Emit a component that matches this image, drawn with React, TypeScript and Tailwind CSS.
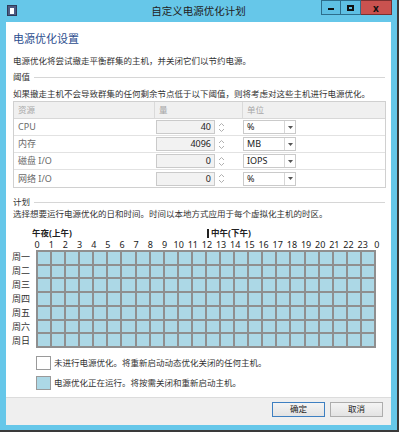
import React from "react";

const rows = [
  { name: "CPU", val: "40", unit: "%" },
  { name: "内存", val: "4096", unit: "MB" },
  { name: "磁盘 I/O", val: "0", unit: "IOPS" },
  { name: "网络 I/O", val: "0", unit: "%" },
];
const days = ["周一", "周二", "周三", "周四", "周五", "周六", "周日"];
const hours = Array.from({ length: 25 }, (_, i) => (i === 24 ? 0 : i));

function Spin() {
  return (
    <svg width="7" height="11" viewBox="0 0 7 11" className="ml-[3px]">
      <path d="M1 4 L3.5 1.5 L6 4" fill="none" stroke="#b0b0b0" strokeWidth="1" />
      <path d="M1 7 L3.5 9.5 L6 7" fill="none" stroke="#b0b0b0" strokeWidth="1" />
    </svg>
  );
}

function Section({ label }: { label: string }) {
  return (
    <div className="flex items-center h-full pl-[7px] pr-[6px]">
      <span className="text-[8.5px] text-[#333]">{label}</span>
      <div className="flex-1 ml-[4px] h-px bg-[#d6d6d6]" />
    </div>
  );
}

export default function App() {
  return (
    <div className="w-[401px] h-[435px] bg-white font-['Noto_Sans','Noto_Sans_CJK_SC',sans-serif]">
      <div className="w-[399px] h-[432px] bg-[#66c7e9] border-r-2 border-b-2 border-[#3a3a3a] flex flex-col">
        {/* Title bar */}
        <div className="h-[22px] grid grid-cols-[1fr_auto_1fr] items-start">
          <div className="pl-[7px] pt-[5px]">
            <div className="w-[10px] h-[11px] bg-[#4d5b83] border border-[#2f3a58] flex items-center justify-center">
              <div className="w-[4px] h-[6px] bg-white" />
            </div>
          </div>
          <div className="h-[22px] leading-[22px] text-[10.5px] text-[#222]">自定义电源优化计划</div>
          <div className="flex justify-end pr-[5px]">
            <div className="w-[20px] h-[15px] bg-[#5ec0e4] border border-[#2d6e8c] flex items-end justify-center pb-[4px]">
              <div className="w-[6px] h-[2px] bg-[#111]" />
            </div>
            <div className="w-[20px] h-[15px] bg-[#5ec0e4] border-y border-r border-[#2d6e8c] flex items-center justify-center">
              <div className="w-[7px] h-[6px] border-2 border-[#111]" />
            </div>
            <div className="w-[31px] h-[15px] bg-[#c9524f] border-y border-r border-[#7a3030] flex items-center justify-center text-[10px] font-bold text-[#111] leading-none">
              x
            </div>
          </div>
        </div>

        {/* Content */}
        <div className="mx-[6px] h-[375px] bg-white flex flex-col">
          <div className="mt-[10px] h-[14px] leading-[14px] pl-[7px] text-[11px] text-[#2c4d8e]">电源优化设置</div>
          <div className="mt-[9px] h-[12px] leading-[12px] pl-[7px] text-[8.5px] text-[#333]">
            电源优化将尝试撤走平衡群集的主机，并关闭它们以节约电源。
          </div>
          <div className="mt-[4px] h-[12px]">
            <Section label="阈值" />
          </div>
          <div className="mt-[5px] h-[12px] leading-[12px] pl-[7px] text-[8.5px] text-[#333]">
            如果撤走主机不会导致群集的任何剩余节点低于以下阈值，则将考虑对这些主机进行电源优化。
          </div>

          {/* Table */}
          <div className="mt-[1px] ml-[7px] w-[373px] border border-[#d0d0d0]">
            <div className="h-[17px] bg-[#f0f0f0] border-b border-[#d8d8d8] flex text-[8.5px] text-[#a6a6a6]">
              <div className="w-[141px] pl-[4px] flex items-center border-r border-[#dadada]">资源</div>
              <div className="w-[88px] pl-[4px] flex items-center border-r border-[#dadada]">量</div>
              <div className="flex-1 pl-[4px] flex items-center">单位</div>
            </div>
            {rows.map((r, i) => (
              <div
                key={r.name}
                className={`h-[17px] flex items-center text-[9px] ${i < rows.length - 1 ? "border-b border-[#e2e2e2]" : ""}`}
              >
                <div className="w-[141px] pl-[4px] text-[#6a6a6a]">{r.name}</div>
                <div className="w-[88px] flex items-center pl-[1px]">
                  <div className="w-[59px] h-[14px] bg-[#f2f2f2] border border-[#cacaca] text-right pr-[3px] leading-[12px] text-[#222]">
                    {r.val}
                  </div>
                  <Spin />
                </div>
                <div className="flex-1 flex items-center">
                  <div className="w-[53px] h-[14px] bg-white border border-[#cacaca] flex">
                    <div className="flex-1 pl-[3px] leading-[12px] text-[#222]">{r.unit}</div>
                    <div className="w-[11px] border-l border-[#d6d6d6] flex items-center justify-center">
                      <svg width="5" height="3" viewBox="0 0 5 3">
                        <path d="M0 0 L5 0 L2.5 3 Z" fill="#555" />
                      </svg>
                    </div>
                  </div>
                </div>
              </div>
            ))}
          </div>

          <div className="mt-[9px] h-[11px]">
            <Section label="计划" />
          </div>
          <div className="h-[11px] leading-[11px] pl-[7px] text-[8.5px] text-[#333]">
            选择想要运行电源优化的日和时间。时间以本地方式应用于每个虚拟化主机的时区。
          </div>

          {/* midnight / noon labels */}
          <div className="mt-[8px] h-[12px] flex items-center pl-[26px] text-[8.5px] font-bold text-[#222]">
            <div className="w-[175px] leading-[12px]">午夜(上午)</div>
            <div className="w-[2px] h-[9px] bg-[#222]" />
            <div className="ml-[2px] leading-[12px]">中午(下午)</div>
          </div>

          {/* hours */}
          <div className="mt-[1px] h-[10px] pl-[24px] grid grid-cols-[repeat(25,14.17px)] text-[9px] leading-[10px] text-[#222]">
            {hours.map((h, i) => (
              <div key={i} className="text-center">
                {h}
              </div>
            ))}
          </div>

          {/* grid */}
          <div className="h-[98px] flex pl-[6px]">
            <div className="w-[24px] grid grid-rows-[repeat(7,1fr)] text-[9px] text-[#333]">
              {days.map((d) => (
                <div key={d} className="flex items-center">
                  {d}
                </div>
              ))}
            </div>
            <div className="w-[340px] h-[98px] bg-[#8f8f8f] p-[2px] grid grid-cols-[repeat(24,1fr)] grid-rows-[repeat(7,1fr)] gap-[2px]">
              {Array.from({ length: 24 * 7 }, (_, i) => (
                <div key={i} className="bg-[#acd8e6]" />
              ))}
            </div>
          </div>

          {/* legend */}
          <div className="mt-[8px] h-[14px] flex items-center pl-[30px]">
            <div className="w-[15px] h-[14px] bg-white border border-[#9a9a9a]" />
            <div className="ml-[3px] text-[8.5px] text-[#333]">未进行电源优化。将重新启动动态优化关闭的任何主机。</div>
          </div>
          <div className="mt-[6px] h-[14px] flex items-center pl-[30px]">
            <div className="w-[15px] h-[14px] bg-[#acd8e6] border border-[#9a9a9a]" />
            <div className="ml-[3px] text-[8.5px] text-[#333]">电源优化正在运行。将按需关闭和重新启动主机。</div>
          </div>
        </div>

        {/* Footer */}
        <div className="mx-[6px] h-[28px] bg-[#efefef] border-t border-[#dcdcdc] flex justify-end items-start pt-[4px] pr-[8px] gap-[5px]">
          <div className="w-[53px] h-[15px] border border-[#3d7fc1] bg-gradient-to-b from-[#f4f4f4] to-[#e3e3e3] flex items-center justify-center text-[8.5px] text-[#222]">
            确定
          </div>
          <div className="w-[53px] h-[15px] border border-[#adadad] bg-gradient-to-b from-[#f4f4f4] to-[#e3e3e3] flex items-center justify-center text-[8.5px] text-[#222]">
            取消
          </div>
        </div>
      </div>
    </div>
  );
}
